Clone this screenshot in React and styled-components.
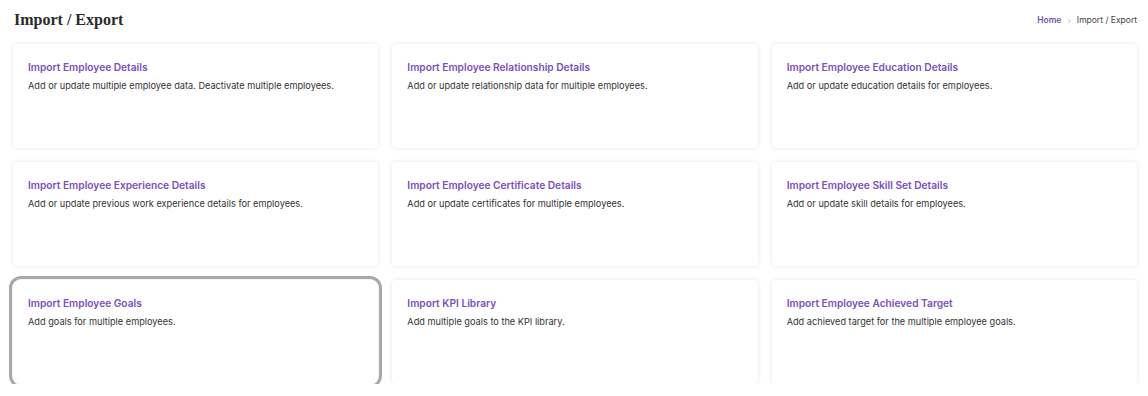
import styled, { createGlobalStyle } from 'styled-components';

const cards = [
  { title: 'Import Employee Details', text: 'Add or update multiple employee data. Deactivate multiple employees.' },
  { title: 'Import Employee Relationship Details', text: 'Add or update relationship data for multiple employees.' },
  { title: 'Import Employee Education Details', text: 'Add or update education details for employees.' },
  { title: 'Import Employee Experience Details', text: 'Add or update previous work experience details for employees.' },
  { title: 'Import Employee Certificate Details', text: 'Add or update certificates for multiple employees.' },
  { title: 'Import Employee Skill Set Details', text: 'Add or update skill details for employees.' },
  { title: 'Import Employee Goals', text: 'Add goals for multiple employees.', focused: true },
  { title: 'Import KPI Library', text: 'Add multiple goals to the KPI library.' },
  { title: 'Import Employee Achieved Target', text: 'Add achieved target for the multiple employee goals.' },
];

const App = () => {
  return (
    <>
      <GlobalStyle />
      <Page>
        <Header>
          <PageTitle>Import / Export</PageTitle>
          <Breadcrumb>
            <Crumb href='#'>Home</Crumb>
            <Sep>›</Sep>
            <span>Import / Export</span>
          </Breadcrumb>
        </Header>

        <Grid>
          {cards.map((c) => (
            <Card key={c.title} $focused={c.focused}>
              <CardTitle>{c.title}</CardTitle>
              <CardText>{c.text}</CardText>
            </Card>
          ))}
        </Grid>
      </Page>
    </>
  );
};

const GlobalStyle = createGlobalStyle`
  body {
    margin: 0;
    background: #ffffff;
    font-family: Inter, 'Noto Sans', sans-serif;
  }
`;

const Page = styled.div`
  padding: 10px 11px 0 13px;
`;

const Header = styled.div`
  display: flex;
  align-items: center;
  justify-content: space-between;
  height: 20px;
  margin-bottom: 14px;
`;

const PageTitle = styled.h1`
  margin: 0 0 0 1px;
  font-family: 'Liberation Serif', serif;
  font-size: 16px;
  font-weight: bold;
  color: #2a2a2a;
`;

const Breadcrumb = styled.div`
  display: flex;
  align-items: center;
  gap: 6px;
  font-size: 8.5px;
  color: #444;
`;

const Crumb = styled.a`
  color: #7a50c0;
  font-weight: 600;
  text-decoration: none;
`;

const Sep = styled.span`
  color: #bbb;
  font-size: 9px;
`;

const Grid = styled.div`
  display: grid;
  grid-template-columns: repeat(3, 1fr);
  gap: 14px;
`;

const Card = styled.div`
  height: 104px;
  box-sizing: border-box;
  padding: 17px 15px;
  background: #fff;
  border-radius: ${(p) => (p.$focused ? '8px' : '4px')};
  box-shadow: 0 0 4px rgba(0, 0, 0, 0.1);
  outline: ${(p) => (p.$focused ? '3px solid #a9a9a9' : 'none')};
  outline-offset: 1px;
`;

const CardTitle = styled.div`
  font-size: 10.2px;
  font-weight: 600;
  color: #7a50c0;
  margin-bottom: 7px;
`;

const CardText = styled.div`
  font-size: 9.2px;
  color: #333;
`;

export default App;
